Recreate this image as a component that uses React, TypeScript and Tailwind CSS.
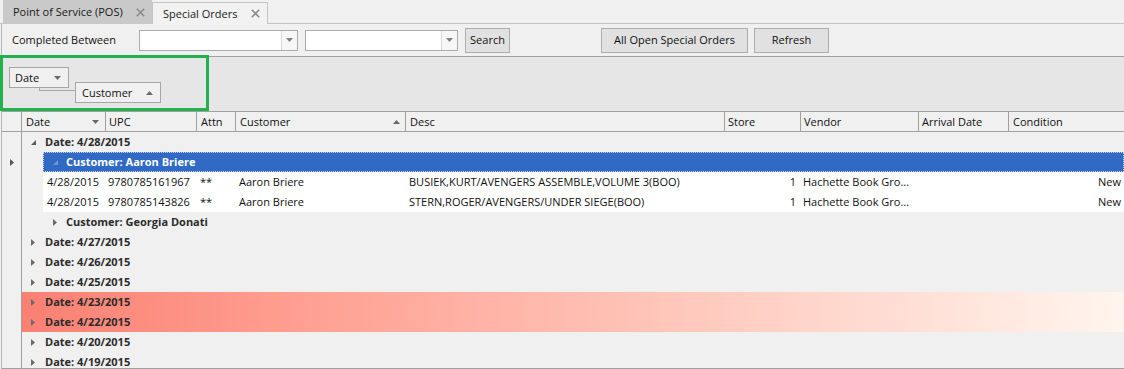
import React from "react";

const TriDown = ({ c = "#707070" }: { c?: string }) => (
  <svg width="7" height="4" viewBox="0 0 7 4"><polygon points="0,0 7,0 3.5,4" fill={c} /></svg>
);
const TriUp = ({ c = "#707070" }: { c?: string }) => (
  <svg width="7" height="4" viewBox="0 0 7 4"><polygon points="0,4 7,4 3.5,0" fill={c} /></svg>
);
const TriRight = ({ c = "#6a6a6a" }: { c?: string }) => (
  <svg width="4" height="7" viewBox="0 0 4 7"><polygon points="0,0 4,3.5 0,7" fill={c} /></svg>
);
const TriExp = ({ c = "#5a5a5a" }: { c?: string }) => (
  <svg width="5" height="5" viewBox="0 0 5 5"><polygon points="5,0 5,5 0,5" fill={c} /></svg>
);
const Close = () => (
  <svg width="9" height="9" viewBox="0 0 9 9">
    <path d="M0.8 0.8 L8.2 8.2 M8.2 0.8 L0.8 8.2" stroke="#8c8c8c" strokeWidth="1.6" />
  </svg>
);

const Combo = ({ w }: { w: string }) => (
  <div className={`${w} h-[21px] bg-white border border-[#acacac] flex justify-end`}>
    <div className="w-[16px] h-full border-l border-[#d9d9d9] bg-[#f7f7f7] flex items-center justify-center">
      <TriDown c="#808080" />
    </div>
  </div>
);

const Btn = ({ w, label }: { w: string; label: string }) => (
  <div className={`${w} h-[25px] bg-[#e1e1e1] border border-[#adadad] flex items-center justify-center text-[#111]`}>
    {label}
  </div>
);

const DateGroup = ({ label, expanded, red }: { label: string; expanded?: boolean; red?: boolean }) => (
  <div
    className={`h-[20px] shrink-0 flex items-center font-bold text-[#2b2b2b] ${
      red ? "bg-linear-to-r from-[#fa8072] to-[#fff5ee]" : ""
    }`}
  >
    <div className="w-[23px] pl-[9px] flex items-center">{expanded ? <TriExp /> : <TriRight />}</div>
    <span>{label}</span>
  </div>
);

const CustGroup = ({ label, selected }: { label: string; selected?: boolean }) => (
  <div className="h-[20px] shrink-0 flex items-center pl-[21px]">
    <div
      className={`flex-1 h-full flex items-center font-bold ${
        selected ? "bg-[#316ac5] text-white border border-dotted border-[#c9d8f2]" : "text-[#2b2b2b]"
      }`}
    >
      <div className={`${selected ? "w-[22px] pl-[9px]" : "w-[23px] pl-[10px]"} flex items-center`}>
        {selected ? <TriExp c="#7893c8" /> : <TriRight />}
      </div>
      <span>{label}</span>
    </div>
  </div>
);

const DataRow = ({ upc, desc }: { upc: string; desc: string }) => (
  <div className="h-[20px] shrink-0 flex items-center pl-[21px]">
    <div className="flex-1 h-full bg-white flex items-center text-[#111] whitespace-nowrap">
      <div className="w-[62px] pl-[4px]">4/28/2015</div>
      <div className="w-[91px] pl-[3px]">{upc}</div>
      <div className="w-[39px] pl-[4px]">**</div>
      <div className="w-[170px] pl-[4px]">Aaron Briere</div>
      <div className="w-[319px] pl-[4px]">{desc}</div>
      <div className="w-[76px] pr-[4px] text-right">1</div>
      <div className="w-[118px] pl-[3px]">Hachette Book Gro...</div>
      <div className="w-[90px]"></div>
      <div className="flex-1 pr-[3px] text-right">New</div>
    </div>
  </div>
);

export default function App() {
  return (
    <div
      className="w-[1124px] h-[369px] overflow-hidden bg-[#f0f0f0] text-[11px] leading-[14px] relative"
      style={{ fontFamily: "'Open Sans', 'Noto Sans', sans-serif" }}
    >
      {/* Tabs */}
      <div className="h-[24px] flex items-end pl-[3px] border-b border-[#c4c4c4]">
        <div className="h-[24px] w-[149px] bg-[#c9c9c9] flex items-center pl-[10px] text-[#1a1a1a] -mb-px">
          <span className="flex-1">Point of Service (POS)</span>
          <span className="w-[16px] flex items-center"><Close /></span>
        </div>
        <div className="w-[116px] bg-[#f2f2f2] border border-b-0 border-[#c4c4c4] flex items-center pl-[10px] text-[#1a1a1a] -mb-px h-[22px]">
          <span className="flex-1">Special Orders</span>
          <span className="w-[16px] flex items-center"><Close /></span>
        </div>
      </div>

      <div className="ml-[1px] border-l border-[#b4b4b4] flex flex-col">
        {/* Toolbar */}
        <div className="h-[33px] shrink-0 border-b border-[#a0a0a0] flex items-center pl-[10px]">
          <div className="w-[127px] text-[#111]">Completed Between</div>
          <Combo w="w-[159px]" />
          <div className="w-[7px]" />
          <Combo w="w-[153px]" />
          <div className="w-[7px]" />
          <Btn w="w-[45px]" label="Search" />
          <div className="w-[91px]" />
          <Btn w="w-[147px]" label="All Open Special Orders" />
          <div className="w-[6px]" />
          <Btn w="w-[75px]" label="Refresh" />
        </div>

        {/* Group panel */}
        <div className="h-[54px] shrink-0 bg-[#e6e6e6] flex items-start relative">
          <div className="mt-[10px] ml-[7px] w-[60px] h-[21px] bg-[#f0f0f0] border border-[#a6a6a6] flex items-center pl-[5px] pr-[7px] text-[#111] relative z-10">
            <span className="flex-1">Date</span>
            <TriDown c="#6a6a6a" />
          </div>
          <div className="absolute left-[37px] top-[30px] w-[36px] h-[4px] border-l border-b border-[#a6a6a6]" />
          <div className="mt-[25px] ml-[6px] w-[86px] h-[21px] bg-[#f0f0f0] border border-[#a6a6a6] flex items-center pl-[6px] pr-[7px] text-[#111] relative z-10">
            <span className="flex-1">Customer</span>
            <TriUp c="#6a6a6a" />
          </div>
        </div>

        {/* Grid */}
        <div className="flex h-[258px] shrink-0 border-b border-[#a0a0a0] overflow-hidden">
          {/* Indicator column */}
          <div className="w-[20px] border-r border-[#a0a0a0] flex flex-col">
            <div className="h-[21px] shrink-0 border-t border-b border-[#a0a0a0]" />
            <div className="h-[20px] shrink-0" />
            <div className="h-[20px] shrink-0 flex items-center pl-[8px]"><TriRight c="#555" /></div>
          </div>
          <div className="flex-1 flex flex-col">
            {/* Header */}
            <div className="h-[21px] shrink-0 border-t border-b border-[#a0a0a0] flex text-[#111]">
              <div className="w-[84px] border-r border-[#a0a0a0] flex items-center pl-[4px] pr-[6px]">
                <span className="flex-1">Date</span>
                <TriDown c="#6a6a6a" />
              </div>
              <div className="w-[91px] border-r border-[#a0a0a0] flex items-center pl-[3px]">UPC</div>
              <div className="w-[39px] border-r border-[#a0a0a0] flex items-center pl-[4px]">Attn</div>
              <div className="w-[170px] border-r border-[#a0a0a0] flex items-center pl-[4px] pr-[5px]">
                <span className="flex-1">Customer</span>
                <TriUp c="#6a6a6a" />
              </div>
              <div className="w-[319px] border-r border-[#a0a0a0] flex items-center pl-[4px]">Desc</div>
              <div className="w-[76px] border-r border-[#a0a0a0] flex items-center pl-[3px]">Store</div>
              <div className="w-[118px] border-r border-[#a0a0a0] flex items-center pl-[3px]">Vendor</div>
              <div className="w-[90px] border-r border-[#a0a0a0] flex items-center pl-[3px]">Arrival Date</div>
              <div className="flex-1 flex items-center pl-[4px]">Condition</div>
            </div>
            {/* Body */}
            <DateGroup label="Date: 4/28/2015" expanded />
            <CustGroup label="Customer: Aaron Briere" selected />
            <DataRow upc="9780785161967" desc="BUSIEK,KURT/AVENGERS ASSEMBLE,VOLUME 3(BOO)" />
            <DataRow upc="9780785143826" desc="STERN,ROGER/AVENGERS/UNDER SIEGE(BOO)" />
            <CustGroup label="Customer: Georgia Donati" />
            <DateGroup label="Date: 4/27/2015" />
            <DateGroup label="Date: 4/26/2015" />
            <DateGroup label="Date: 4/25/2015" />
            <DateGroup label="Date: 4/23/2015" red />
            <DateGroup label="Date: 4/22/2015" red />
            <DateGroup label="Date: 4/20/2015" />
            <DateGroup label="Date: 4/19/2015" />
          </div>
        </div>
      </div>

      {/* Annotation box */}
      <div className="absolute left-0 top-[55px] w-[209px] h-[56px] border-[3px] border-[#22b14c] pointer-events-none" />
    </div>
  );
}
